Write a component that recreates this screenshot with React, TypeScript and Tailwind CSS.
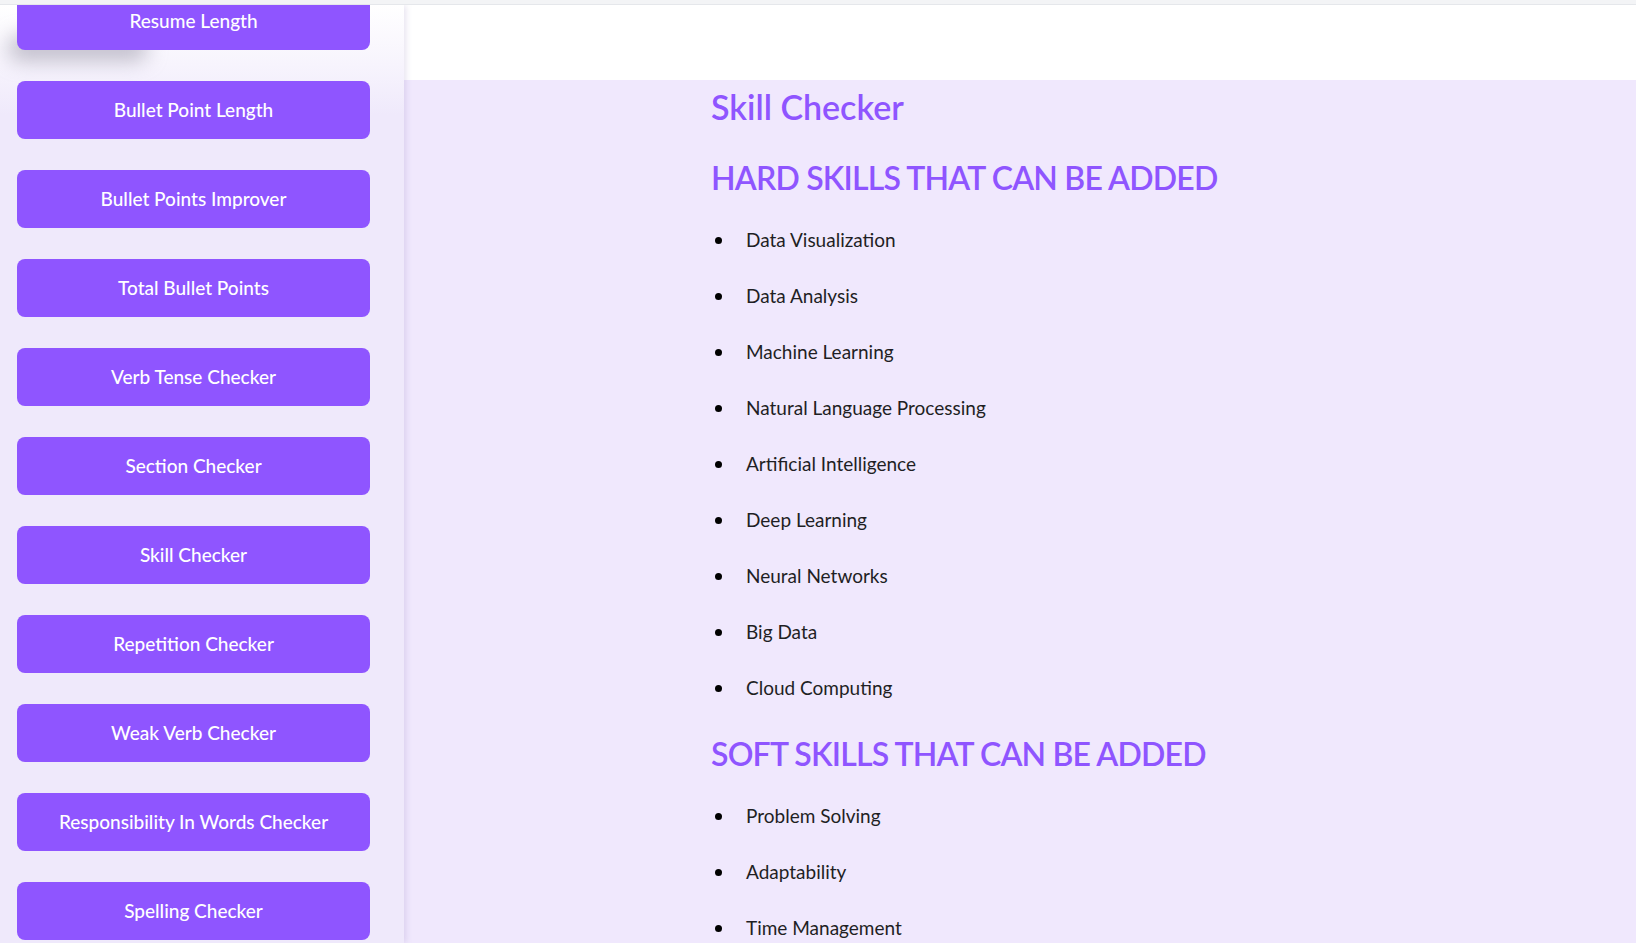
import React from "react";

const tools = [
  "Resume Length",
  "Bullet Point Length",
  "Bullet Points Improver",
  "Total Bullet Points",
  "Verb Tense Checker",
  "Section Checker",
  "Skill Checker",
  "Repetition Checker",
  "Weak Verb Checker",
  "Responsibility In Words Checker",
  "Spelling Checker",
];

const hardSkills = [
  "Data Visualization",
  "Data Analysis",
  "Machine Learning",
  "Natural Language Processing",
  "Artificial Intelligence",
  "Deep Learning",
  "Neural Networks",
  "Big Data",
  "Cloud Computing",
];

const softSkills = ["Problem Solving", "Adaptability", "Time Management"];

const SkillList = ({ items }: { items: string[] }) => (
  <ul className="flex flex-col">
    {items.map((s) => (
      <li key={s} className="flex items-center h-[56px] text-[19px] text-[#1f1f24]">
        <span className="w-[7px] h-[7px] rounded-full bg-black ml-[4px] mr-[24px]" />
        {s}
      </li>
    ))}
  </ul>
);

export default function App() {
  return (
    <div
      className="w-[1636px] h-[943px] overflow-hidden flex flex-col bg-white"
      style={{ fontFamily: "Lato, 'Open Sans', sans-serif" }}
    >
      <div className="h-[5px] bg-[#f3f4f6] border-b border-[#e5e7eb] relative z-20" />
      <div className="flex flex-1 min-h-0">
        {/* sidebar */}
        <aside className="relative w-[404px] shrink-0 overflow-hidden bg-[linear-gradient(to_bottom,#ffffff_0px,#f7f4fd_60px,#efe9fb_110px)] shadow-[2px_0_6px_rgba(120,100,170,0.18)] z-10">
          <div className="absolute left-[8px] top-[30px] w-[140px] h-[26px] rounded-full bg-[#8a8599]/50 blur-[10px]" />
          <div className="relative flex flex-col gap-[31px] px-[17px] -mt-[13px]">
            {tools.map((t) => (
              <button
                key={t}
                className="h-[58px] w-[353px] shrink-0 rounded-[8px] bg-[#8f55ff] text-white text-[19px] font-medium flex items-center justify-center"
              >
                {t}
              </button>
            ))}
          </div>
        </aside>

        {/* main */}
        <main className="flex-1 flex flex-col min-w-0">
          <div className="h-[75px] bg-white shrink-0" />
          <section className="flex-1 bg-[#f0e8fd] pl-[307px] pt-[5px]">
            <h1 className="text-[34px] font-semibold text-[#8f55ff] leading-[44px]">Skill Checker</h1>
            <h2 className="mt-[27px] text-[32px] tracking-[-0.8px] font-semibold text-[#8f55ff] leading-[44px]">
              HARD SKILLS THAT CAN BE ADDED
            </h2>
            <div className="mt-[12px]">
              <SkillList items={hardSkills} />
            </div>
            <h2 className="mt-[16px] text-[32px] tracking-[-0.8px] font-semibold text-[#8f55ff] leading-[44px]">
              SOFT SKILLS THAT CAN BE ADDED
            </h2>
            <div className="mt-[12px]">
              <SkillList items={softSkills} />
            </div>
          </section>
        </main>
      </div>
    </div>
  );
}
